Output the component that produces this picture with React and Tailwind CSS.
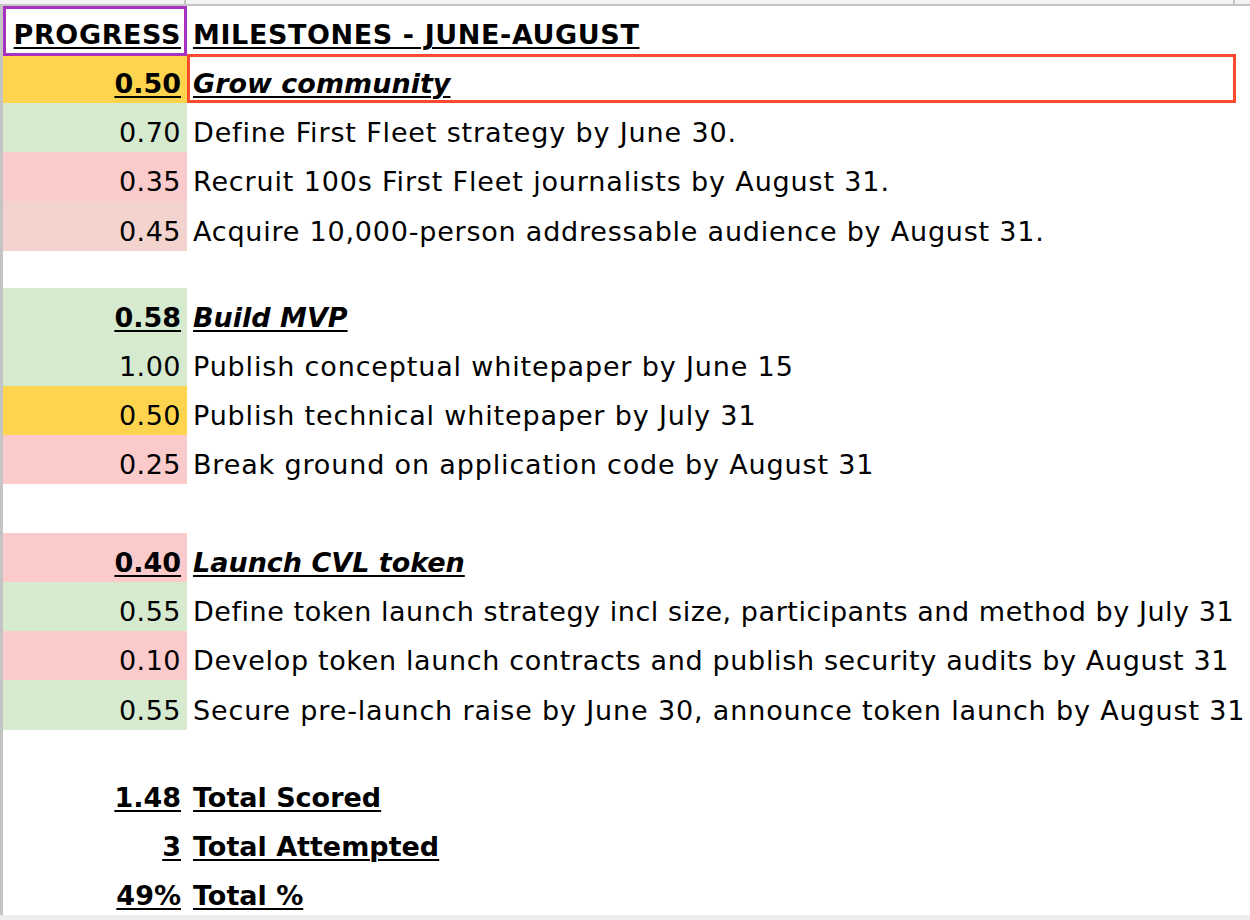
import React from 'react';

// Planilha de progresso dos marcos (junho-agosto)
const rows = [
  { type: 'group', score: '0.50', label: 'Grow community', bg: 'bg-[#fed44e]', h: 'h-[47px]', selected: true },
  { type: 'item', score: '0.70', label: 'Define First Fleet strategy by June 30.', bg: 'bg-[#d6eacf]', h: 'h-[49px]' },
  { type: 'item', score: '0.35', label: 'Recruit 100s First Fleet journalists by August 31.', bg: 'bg-[#fbcaca]', h: 'h-[49px]' },
  { type: 'item', score: '0.45', label: 'Acquire 10,000-person addressable audience by August 31.', bg: 'bg-[#f2d3ce]', h: 'h-[50px]', track: 'tracking-[0.78px]' },
  { type: 'blank', h: 'h-[37px]' },
  { type: 'group', score: '0.58', label: 'Build MVP', bg: 'bg-[#d6eacf]', h: 'h-[49px]' },
  { type: 'item', score: '1.00', label: 'Publish conceptual whitepaper by June 15', bg: 'bg-[#d6eacf]', h: 'h-[49px]' },
  { type: 'item', score: '0.50', label: 'Publish technical whitepaper by July 31', bg: 'bg-[#fed44e]', h: 'h-[49px]' },
  { type: 'item', score: '0.25', label: 'Break ground on application code by August 31', bg: 'bg-[#fbcaca]', h: 'h-[49px]' },
  { type: 'blank', h: 'h-[49px]' },
  { type: 'group', score: '0.40', label: 'Launch CVL token', bg: 'bg-[#fbcaca]', h: 'h-[49px]' },
  { type: 'item', score: '0.55', label: 'Define token launch strategy incl size, participants and method by July 31', bg: 'bg-[#d6eacf]', h: 'h-[49px]', track: 'tracking-[0.55px]' },
  { type: 'item', score: '0.10', label: 'Develop token launch contracts and publish security audits by August 31', bg: 'bg-[#fbcaca]', h: 'h-[49px]', track: 'tracking-[0.65px]' },
  { type: 'item', score: '0.55', label: 'Secure pre-launch raise by June 30, announce token launch by August 31', bg: 'bg-[#d6eacf]', h: 'h-[50px]' },
  { type: 'blank', h: 'h-[38px]' },
  { type: 'total', score: '1.48', label: 'Total Scored', h: 'h-[49px]' },
  { type: 'total', score: '3', label: 'Total Attempted', h: 'h-[49px]' },
  { type: 'total', score: '49%', label: 'Total %', h: 'h-[49px]' },
];

const ul = 'underline decoration-2 underline-offset-[3px]';

const Row = ({ row }) => {
  if (row.type === 'blank') {
    return <div className={`${row.h}`} />;
  }

  const bold = row.type !== 'item';
  const italic = row.type === 'group';

  return (
    <div className={`flex ${row.h}`}>
      <div
        className={`w-[184px] shrink-0 flex items-end justify-end pr-[6px] pb-[1px] ${row.bg || ''}`}
      >
        <span className={bold ? `font-bold ${ul}` : 'tracking-[0.5px]'}>{row.score}</span>
      </div>
      <div className="relative flex-1 flex items-end pl-[6px] pb-[1px] whitespace-nowrap">
        <span className={bold ? `font-bold ${ul} ${italic ? 'italic' : ''}` : row.track || 'tracking-[0.85px]'}>
          {row.label}
        </span>
        {row.selected && (
          <div className="absolute left-0 top-[-2px] right-[14px] bottom-0 border-[3.5px] border-[#fd4a2c] pointer-events-none" />
        )}
      </div>
    </div>
  );
};

const App = () => {
  return (
    <div
      className="w-[1250px] h-[920px] overflow-hidden bg-white text-black flex flex-col"
      style={{ fontFamily: '"DejaVu Sans", Lato, sans-serif' }}
    >
      {/* Cabeçalho de colunas (faixa cinza) */}
      <div className="h-[6px] shrink-0 flex bg-[#f3f3f3] border-b-2 border-[#c4c4c4]">
        <div className="w-[186px] border-r-2 border-[#c4c4c4]" />
        <div className="w-[1049px] border-r-2 border-[#c4c4c4]" />
      </div>

      <div className="flex-1 flex flex-col border-l-[3px] border-[#c4c4c4] text-[27px] leading-[36px]">
        {/* Linha de títulos */}
        <div className="flex h-[50px] shrink-0">
          <div className="w-[184px] shrink-0 flex items-end justify-end pr-[3px] pb-[0px] border-[3px] border-[#a832bd]">
            <span className={`font-bold tracking-[0.6px] ${ul}`}>PROGRESS</span>
          </div>
          <div className="flex-1 flex items-end pl-[6px] pb-[3px]">
            <span className={`font-bold tracking-[0.6px] ${ul}`}>MILESTONES - JUNE-AUGUST</span>
          </div>
        </div>

        {rows.map((row, i) => (
          <Row key={i} row={row} />
        ))}
      </div>

      {/* Faixa inferior */}
      <div className="h-[5px] shrink-0 bg-[#eeeeee]" />
    </div>
  );
};

export default App;
